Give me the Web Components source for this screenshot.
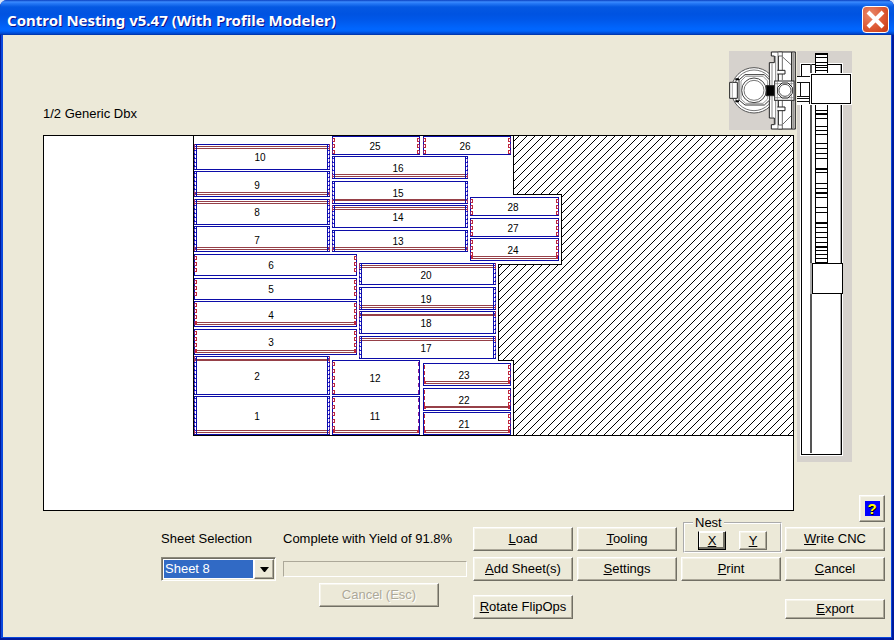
<!DOCTYPE html>
<html lang="en">
<head>
<meta charset="utf-8">
<title>Control Nesting</title>
<style>
  html, body { margin: 0; min-height: 100vh; }
  body { background: #d8e4f8; font-family: "Liberation Sans", sans-serif; font-size: 13px; line-height: 16px; color: #000; display: flex; }
</style>
</head>
<body>
<nesting-window></nesting-window>

<script>
const define = (name, html, setup) => {
  const t = document.createElement('template');
  t.innerHTML = html;
  customElements.define(name, class extends HTMLElement {
    constructor() {
      super();
      this.attachShadow({ mode: 'open' }).append(t.content.cloneNode(true));
    }
    connectedCallback() {
      if (setup && !this.ready) { this.ready = true; setup(this, this.shadowRoot); }
    }
  });
};

define('push-button', `
<style>
  :host { display: grid; }
  button { font: inherit; color: inherit; padding: 0; margin: 0; background: #ece9d8; white-space: nowrap;
    border: 1px solid; border-color: #fff #716f64 #716f64 #fff;
    box-shadow: inset -1px -1px #aca899, inset 1px 1px #f6f4ea; }
  button:disabled { color: #aca899; text-shadow: 1px 1px #fff; }
  :host([chosen]) button { border-color: #fff #000 #000 #000; box-shadow: inset -2px -2px #716f64, inset 1px 1px #fff; }
</style>
<button type="button"><slot></slot></button>`, (el, root) => {
  const b = root.querySelector('button');
  b.disabled = el.hasAttribute('disabled');
  if (el.title) b.setAttribute('aria-label', el.title);
});

define('title-bar', `
<style>
  :host { display: flex; align-items: center; justify-content: space-between; height: 35px; padding: 0 5px 0 7px; box-sizing: border-box;
    border-radius: 7px 7px 0 0;
    background: linear-gradient(#0a3fc0 0, #3c8cff 2px, #2a7cf8 3px, #0458e2 7px, #0053e1 14px, #0058ea 20px, #0066ff 29px, #0064fb 31px, #0043c8 34px, #002e9a 35px); }
  h1 { margin: 4px 0 0; font: bold 15px/20px "Noto Sans", "Open Sans", sans-serif; color: #fff; text-shadow: 1px 1px #0f1089; white-space: nowrap; }
  button { width: 27px; height: 27px; padding: 0; margin-top: 3px; border: 1px solid #fff; border-radius: 4px;
    background: radial-gradient(circle at 30% 30%, #e88a6c, #dd5833 55%, #c33a12); display: grid; place-items: center; }
</style>
<h1><slot></slot></h1>
<button type="button" aria-label="Close"><svg width="19" height="19" viewBox="0 0 19 19"><path d="M2 2L17 17M17 2L2 17" stroke="#fff" stroke-width="4"/></svg></button>`);

define('sheet-view', `
<style>
  :host { display: block; }
  svg { display: block; width: 100%; height: auto; shape-rendering: crispEdges; }
  text { font: 10px "Liberation Sans", sans-serif; text-anchor: middle; }
</style>
<svg viewBox="43 135 751 376" role="img" aria-label="Nested parts on the sheet">
  <defs>
    <pattern id="hatch" width="8" height="8" patternUnits="userSpaceOnUse">
      <path d="M6 0h1v1h-1zM5 1h1v1h-1zM4 2h1v1h-1zM3 3h1v1h-1zM2 4h1v1h-1zM1 5h1v1h-1zM0 6h1v1h-1zM7 7h1v1h-1z"/>
    </pattern>
  </defs>
  <rect x="43" y="135" width="751" height="376" fill="#000"/>
  <rect x="44" y="136" width="749" height="374" fill="#fff"/>
  <path d="M513 136V194H561V264H498V360H513V435H793V136Z" fill="url(#hatch)"/>
  <g fill="#000">
    <rect x="193" y="136" width="1" height="300"/><rect x="193" y="435" width="600" height="1"/>
    <rect x="513" y="136" width="1" height="59"/><rect x="513" y="194" width="49" height="1"/>
    <rect x="561" y="194" width="1" height="71"/><rect x="498" y="264" width="64" height="1"/>
    <rect x="498" y="264" width="1" height="97"/><rect x="498" y="360" width="16" height="1"/>
    <rect x="513" y="360" width="1" height="76"/>
  </g>
  <g id="parts"></g>
</svg>`, (el, root) => {
  // [number, left, top, right, bottom, label x, label y, banding rows, edge kind]
  const parts = [
    [1,194,396,329,434,257,417,[430,432],'b'], [2,194,356,329,394,257,377,[359,360],'b'],
    [3,194,329,356,354,271,343,[350,352],'r'], [4,194,301,356,326,271,316,[322,324],'r'],
    [5,194,278,356,299,271,290,[],'r'], [6,194,254,356,275,271,266,[],'r'],
    [7,194,226,329,251,257,241,[247,249],'b'], [8,194,199,329,224,257,213,[201,203],'b'],
    [9,194,171,329,196,257,186,[192,194],'b'], [10,194,144,329,169,260,158,[146,148],'b'],
    [11,332,396,419,434,375,417,[430,432],'p'], [12,332,360,419,394,375,379,[],'p'],
    [13,332,230,467,251,398,242,[247,249],'b'], [14,332,205,467,227,398,218,[207,209],'b'],
    [15,332,181,467,203,398,194,[199,200],'b'], [16,332,156,467,178,398,169,[174,176],'b'],
    [17,359,336,495,358,426,349,[338,340],'b'], [18,359,311,495,333,426,324,[314,315],'b'],
    [19,359,287,495,309,426,300,[305,307],'b'], [20,359,263,495,284,426,276,[265,267],'b'],
    [21,423,412,510,434,464,425,[430,432],'s'], [22,423,388,510,410,464,401,[406,407],'s'],
    [23,423,363,510,385,464,376,[381,383],'s'], [24,470,238,558,260,513,251,[256,258],'r'],
    [25,332,136,419,154,375,147,[],'r'], [26,423,136,510,154,465,147,[],'r'],
    [27,470,218,558,236,513,229,[],'r'], [28,470,197,558,215,513,208,[],'r']
  ];
  const r = (x, y, w, h, f) => `<rect x="${x}" y="${y}" width="${w}" height="${h}" fill="${f}"/>`;
  const frame = (x, y, w, h, c, f) => r(x, y, w, h, c) + r(x + 1, y + 1, w - 2, h - 2, f);
  const blue = '#0c0ca8', vivid = '#2020e8', red = '#c0283c', band = '#964048';
  let out = '';
  for (const [n, x1, y1, x2, y2, lx, ly, rows, kind] of parts) {
    out += frame(x1, y1, x2 - x1 + 1, y2 - y1 + 1, blue, '#fff');
    for (const y of rows) out += r(x1 + 1, y, x2 - x1 - 1, 1, band);
    if (kind === 'b') {
      for (const [o, i] of [[x1, x1 + 2], [x2, x2 - 2]]) {
        out += r(i, y1, 1, y2 - y1 + 1, blue);
        for (let y = y1 + 2; y < y2 - 1; y += 4) {
          out += r(Math.min(o, i) + 1, y, 1, 1, vivid) + r(o, y + 1, 1, 2, '#7a55c8');
        }
        if (rows.length) {
          const top = rows[0] - y1 < 6;
          out += r(o, top ? y1 : rows[0], 1, top ? rows[1] - y1 + 2 : y2 - rows[0], '#a02c68');
        }
      }
    } else {
      const step = Math.max(6, Math.round((y2 - y1) / 4));
      for (let y = y1 + 2; y + 3 < y2; y += y2 - y1 > 30 ? 7 : step) {
        out += kind === 's' ? r(x1 + 1, y, 1, 4, red) : frame(x1, y, 3, 4, red, '#fff') + r(x1, y, 1, 4, '#6c1c88');
        out += kind === 'p' ? r(x2 - 1, y, 1, 4, '#8a1c98') : frame(x2 - 2, y, 3, 4, red, '#fff') + r(x2, y, 1, 4, '#6c1c88');
      }
      if (rows.length) out += r(x1 + 1, rows[0], 2, 3, red) + r(x2 - 2, rows[0], 2, 3, red);
    }
    out += `<text x="${lx}" y="${ly + 3}">${n}</text>`;
  }
  root.getElementById('parts').innerHTML = out;
});

define('drill-head', `
<style>:host { display: block; } svg { display: block; }</style>
<svg width="67" height="79" viewBox="12 9 201 237" role="img" aria-label="Drill head" fill="#fff" stroke="#222" stroke-width="3">
  <rect x="12" y="9" width="201" height="237" fill="#d6d2cd" stroke="none"/>
  <circle cx="87" cy="127" r="68" stroke="#555"/><circle cx="87" cy="127" r="61" stroke="#777"/>
  <path d="M133 44H148V24H139V12H160V243H139V230H148V210H133Z"/>
  <path d="M141 46V208M152 24V230" stroke="#888"/>
  <path d="M160 12H200V243H160Z"/><path d="M200 12H211V243H200Z" fill="#d6d2cd"/><path d="M205 12V243" stroke="#888"/>
  <path d="M160 12H172V24H160M160 243H172V231H160M172 24V96M172 158V231M174 28L198 50M174 228L198 204" stroke-width="2"/>
  <path d="M157 67H180V78H157M157 177H180V188H157"/>
  <path d="M60 80H118L134 96V156L118 171H60L42 156V96Z" stroke="#333"/>
  <path d="M62 85H114L128 99V153L114 166H62L48 153V99Z" stroke="#999"/>
  <circle cx="87" cy="127" r="37" stroke="#444"/><circle cx="87" cy="127" r="30" stroke="#777"/>
  <path d="M14 103H37V151H14Z"/><path d="M31 94H42M31 160H42" stroke="#000" stroke-width="6"/><path d="M22 104V150" stroke="#aaa"/>
  <rect x="124" y="113" width="24" height="30" fill="#000"/>
  <rect x="149" y="99" width="58" height="58"/><path d="M157 99V157M199 99V157M149 107H207M149 149H207" stroke="#777" stroke-width="2"/>
  <path d="M171 105H189L202 118V136L189 150H171L158 136V118Z" stroke="#222"/><circle cx="180" cy="127" r="18" stroke="#555"/>
</svg>`);

define('gantry-rail', `
<style>:host { display: block; } svg { display: block; shape-rendering: crispEdges; }</style>
<svg width="55" height="411" viewBox="797 51 55 411" role="img" aria-label="Gantry rail">
  <rect x="797" y="51" width="55" height="411" fill="#d6d2cd"/>
  <rect x="800" y="63" width="43" height="393" fill="#fff"/>
  <g fill="#000">
    <rect x="801" y="64" width="1" height="391"/><rect x="801" y="64" width="41" height="1"/>
    <rect x="841" y="64" width="1" height="391"/><rect x="801" y="454" width="41" height="1"/>
  </g>
  <rect x="840" y="65" width="1" height="389" fill="#aaa"/>
  <rect x="810" y="64" width="2" height="389" fill="#555"/>
  <rect x="815" y="53" width="13" height="211" fill="#000"/>
  <g id="rungs" fill="#fff"></g>
  <rect x="797" y="76" width="14" height="29" fill="#fff"/>
  <path d="M797 76.5H811M797 82.5H811M797 96.5H811M797 98.5H811M797 101.5H811M800.5 82V97M809.5 82V104" stroke="#111"/>
  <rect x="810" y="73" width="42" height="32" fill="#fff"/>
  <rect x="811" y="74" width="40" height="30" fill="#000"/><rect x="812" y="75" width="38" height="28" fill="#fff"/>
  <rect x="810" y="263" width="2" height="31" fill="#aaa"/>
  <rect x="812" y="263" width="31" height="31" fill="#000"/><rect x="813" y="264" width="29" height="29" fill="#fff"/>
</svg>`, (el, root) => {
  const lines = [54,57,62,65,67,70,73,104,110,113,114,118,126,130,134,143,148,153,158,168,169,172,183,188,192,193,197,207,212,222,223,227,232,237,242,246,247,250,254,258,262];
  let out = '';
  for (let i = 0; i < lines.length - 1; i++) {
    const h = lines[i + 1] - lines[i] - 1;
    if (h > 0) out += `<rect x="816" y="${lines[i] + 1}" width="11" height="${h}"/>`;
  }
  root.getElementById('rungs').innerHTML = out;
});

define('sheet-picker', `
<style>
  :host { display: contents; }
  label { align-self: center; white-space: nowrap; }
  .box { display: grid; grid-template-columns: 1fr 20px; box-sizing: border-box; height: 24px; background: #fff; padding: 1px;
    border: 1px solid; border-color: #8c897c #fff #fff #8c897c; box-shadow: inset 1px 1px #716f64, inset -1px -1px #ece9d8; }
  select { grid-area: 1 / 1 / 2 / 3; appearance: none; border: 0; margin: 1px 0; padding: 0 22px 0 2px; font: inherit; line-height: 18px; color: #fff; border-radius: 0;
    background: linear-gradient(#316ac5, #316ac5) 1px 0 / calc(100% - 22px) 100% no-repeat; }
  .arrow { grid-area: 1 / 2; pointer-events: none; background: #ece9d8; display: grid; place-items: center;
    border: 1px solid; border-color: #fff #716f64 #716f64 #fff; box-shadow: inset -1px -1px #aca899; }
</style>
<label for="s">Sheet Selection</label>
<div class="box"><select id="s"><option>Sheet 8</option></select><span class="arrow"><svg width="9" height="5" viewBox="0 0 9 5"><path d="M0 0H9L5 5H4Z"/></svg></span></div>`);

define('run-status', `
<style>
  :host { display: grid; grid-template: 24px 24px 24px / 115px 184px; gap: 6px 7px; grid-auto-flow: column; }
  .text { grid-area: 1 / 2; align-self: center; white-space: nowrap; }
  .progress { grid-area: 2 / 2; align-self: center; height: 14px; border: 1px solid; border-color: #aca899 #fff #fff #aca899; }
  push-button { grid-area: 3 / 2; width: 120px; justify-self: center; margin: -4px 0 4px 8px; }
</style>
<sheet-picker></sheet-picker>
<span class="text">Complete with Yield of 91.8%</span>
<div class="progress" role="progressbar" aria-label="Nesting progress"></div>
<push-button disabled>Cancel (Esc)</push-button>`);

define('nest-group', `
<style>
  :host { display: block; margin: -12px -1px -1px 2px; }
  fieldset { margin: 0; padding: 0 13px 1px; border: 2px groove #fff; display: flex; justify-content: space-between; }
  legend { padding: 0 2px; margin-left: -5px; line-height: 16px; }
  push-button { width: 28px; height: 19px; }
</style>
<fieldset><legend>Nest</legend>
  <push-button chosen><u>X</u></push-button><push-button><u>Y</u></push-button>
</fieldset>`);

define('action-pad', `
<style>
  :host { display: grid; grid-template-columns: repeat(4, 100px); grid-template-rows: 24px 24px 24px; gap: 6px 4px; }
  .low { margin: 8px 0 -8px; }
  .export { grid-column: 4; margin: 12px 0 -8px; }
</style>
<push-button><u>L</u>oad</push-button>
<push-button><u>T</u>ooling</push-button>
<nest-group></nest-group>
<push-button><u>W</u>rite CNC</push-button>
<push-button><u>A</u>dd Sheet(s)</push-button>
<push-button><u>S</u>ettings</push-button>
<push-button><u>P</u>rint</push-button>
<push-button><u>C</u>ancel</push-button>
<push-button class="low"><u>R</u>otate FlipOps</push-button>
<push-button class="export"><u>E</u>xport</push-button>`);

define('nesting-window', `
<style>
  :host { flex: 1; display: flex; flex-direction: column; min-height: 100vh; box-sizing: border-box; border-radius: 7px 7px 0 0;
    background: #0a48dc; box-shadow: inset 1px -2px #001a9c, inset -2px 0 #001a9c; }
  main { flex: 1; margin: 0 3px 3px; padding: 16px 6px 18px 40px; background: #ece9d8; }
  .work { display: grid; grid-template-columns: 1fr 55px 33px; grid-template-rows: 84px auto 6px; }
  .head { display: flex; justify-content: space-between; align-items: flex-start; margin-right: 1px; }
  .head span { align-self: end; margin-bottom: 13px; }
  sheet-view { margin-right: 3px; }
  gantry-rail { grid-area: 1 / 2 / 3 / 3; }
  .help { grid-area: 1 / 3 / 4 / 4; place-self: end; width: 26px; height: 27px; margin-bottom: -5px; }
  .q { display: block; width: 15px; margin: auto; background: #00f; color: #ff0; font: bold 15px/15px "Liberation Sans", sans-serif; text-shadow: 1px 1px #000; }
  .controls { display: flex; justify-content: flex-end; gap: 6px; padding-top: 10px; }
</style>
<title-bar>Control Nesting v5.47 (With Profile Modeler)</title-bar>
<main>
  <div class="work">
    <div class="head"><span>1/2 Generic Dbx</span><drill-head></drill-head></div>
    <sheet-view></sheet-view>
    <gantry-rail></gantry-rail>
    <push-button class="help" title="Help"><span class="q">?</span></push-button>
  </div>
  <div class="controls"><run-status></run-status><action-pad></action-pad></div>
</main>`);
</script>
</body>
</html>
